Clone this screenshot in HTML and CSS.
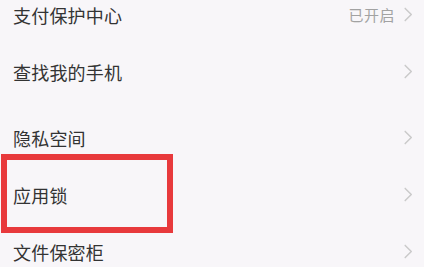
FILE: index.html
```html
<!DOCTYPE html>
<html lang="zh-CN">
<head>
<meta charset="utf-8">
<link rel="stylesheet" href="styles.css">
</head>
<body>
<div class="screen">
  <ul class="list">
    <li class="row"><span class="label">支付保护中心</span><span class="extra"><span class="status">已开启</span><svg class="chev" viewBox="0 0 10 16"><path d="M2 1.5 L8.5 8 L2 14.5" /></svg></span></li>
    <li class="row"><span class="label">查找我的手机</span><span class="extra"><svg class="chev" viewBox="0 0 10 16"><path d="M2 1.5 L8.5 8 L2 14.5" /></svg></span></li>
  </ul>
  <ul class="list list-gap">
    <li class="row"><span class="label">隐私空间</span><span class="extra"><svg class="chev" viewBox="0 0 10 16"><path d="M2 1.5 L8.5 8 L2 14.5" /></svg></span></li>
    <li class="row"><span class="label">应用锁</span><span class="extra"><svg class="chev" viewBox="0 0 10 16"><path d="M2 1.5 L8.5 8 L2 14.5" /></svg></span></li>
    <li class="row"><span class="label">文件保密柜</span><span class="extra"><svg class="chev" viewBox="0 0 10 16"><path d="M2 1.5 L8.5 8 L2 14.5" /></svg></span></li>
  </ul>
  <div class="highlight"></div>
</div>
</body>
</html>
```
FILE: styles.css
```css
html, body {
  margin: 0;
  padding: 0;
  background: #f8f6f9;
}
.screen {
  position: relative;
  width: 424px;
  height: 267px;
  overflow: hidden;
  font-family: "Noto Sans CJK SC", "Noto Sans", sans-serif;
}
.list {
  list-style: none;
  margin: 0;
  padding: 0;
}
.list:first-child {
  margin-top: -14px;
}
.list-gap {
  margin-top: 9px;
}
.row {
  height: 57px;
  display: flex;
  align-items: center;
  justify-content: space-between;
  padding: 0 11px 0 13px;
}
.label {
  font-size: 18px;
  color: #333;
  letter-spacing: 0.2px;
}
.extra {
  display: flex;
  align-items: center;
  gap: 8px;
}
.status {
  font-size: 15px;
  color: #a2a2a2;
  letter-spacing: 0.5px;
}
.chev {
  width: 10px;
  height: 15px;
}
.chev path {
  fill: none;
  stroke: #cacaca;
  stroke-width: 1.6;
  stroke-linecap: round;
  stroke-linejoin: round;
}
.highlight {
  position: absolute;
  left: 1px;
  top: 154px;
  width: 160px;
  height: 67px;
  border: 6px solid #e8393c;
}
```
